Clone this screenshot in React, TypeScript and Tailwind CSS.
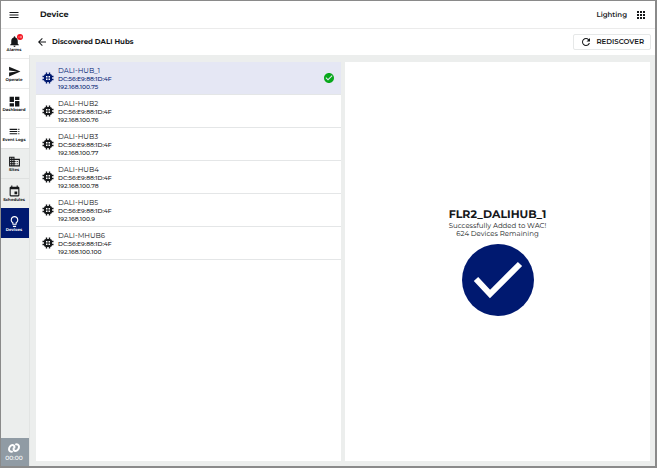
import type { ReactNode } from 'react';
import { clsx } from 'clsx';
import {
  MdApps,
  MdArrowBack,
  MdBusiness,
  MdCheckCircle,
  MdDashboard,
  MdEvent,
  MdLightbulbOutline,
  MdMenu,
  MdNotifications,
  MdRefresh,
  MdSend,
  MdToc,
} from 'react-icons/md';

type NavItem = {
  label: string;
  icon: ReactNode;
  tone: 'light' | 'muted' | 'active';
  alert?: boolean;
};

const navItems: NavItem[] = [
  { label: 'Alarms', icon: <MdNotifications />, tone: 'light', alert: true },
  { label: 'Operate', icon: <MdSend />, tone: 'light' },
  { label: 'Dashboard', icon: <MdDashboard />, tone: 'light' },
  { label: 'Event Logs', icon: <MdToc />, tone: 'light' },
  { label: 'Sites', icon: <MdBusiness />, tone: 'muted' },
  { label: 'Schedules', icon: <MdEvent />, tone: 'muted' },
  { label: 'Devices', icon: <MdLightbulbOutline />, tone: 'active' },
];

const hubs = [
  { name: 'DALI-HUB_1', mac: 'DC:56:E9:88:1D:4F', ip: '192.168.100.75', added: true },
  { name: 'DALI-HUB2', mac: 'DC:56:E9:88:1D:4F', ip: '192.168.100.76' },
  { name: 'DALI-HUB3', mac: 'DC:56:E9:88:1D:4F', ip: '192.168.100.77' },
  { name: 'DALI-HUB4', mac: 'DC:56:E9:88:1D:4F', ip: '192.168.100.78' },
  { name: 'DALI-HUB5', mac: 'DC:56:E9:88:1D:4F', ip: '192.168.100.9' },
  { name: 'DALI-MHUB6', mac: 'DC:56:E9:88:1D:4F', ip: '192.168.100.100' },
];

function ChipIcon() {
  return (
    <svg viewBox="0 0 24 24" className="size-3 shrink-0" aria-hidden="true">
      <path d="M9 1v22M15 1v22M1 9h22M1 15h22" stroke="currentColor" strokeWidth="2.800" />
      <rect x="4" y="4" width="16" height="16" rx="4" fill="currentColor" />
      <path d="M8 8h3v3H8zM13 8h3v3h-3zM8 13h3v3H8zM13 13h3v3h-3z" fill="white" />
    </svg>
  );
}

function AlertBadge() {
  return (
    <svg viewBox="0 0 12 12" className="absolute -top-px -right-0.5 size-1.5" aria-hidden="true">
      <circle cx="6" cy="6" r="6" fill="#f4101c" />
      <path d="M4 4v4M7 4h2v4H7z" fill="none" stroke="white" strokeOpacity="0.7" />
    </svg>
  );
}

function LinkIcon() {
  return (
    <svg viewBox="0 0 24 20" className="h-2.5 w-3" fill="none" stroke="currentColor" strokeWidth="4" aria-hidden="true">
      <path d="M9.500 16.500C6 19 2 16.500 2 12.500c0-4.500 3.500-8.500 7-8.500 3.500 0 4.500 3 3.500 6.500" />
      <path d="M14.500 3.500C18 1 22 3.500 22 7.500c0 4.500-3.500 8.500-7 8.500-3.500 0-4.500-3-3.500-6.500" />
    </svg>
  );
}

function Sidebar() {
  return (
    <nav className="flex w-7 shrink-0 flex-col bg-[#eceeed]">
      <button aria-label="Menu" className="flex h-[27px] items-center justify-center bg-white pr-0.5">
        <MdMenu className="size-3" />
      </button>
      {navItems.map(({ label, icon, tone, alert }) => (
        <a
          key={label}
          href="#"
          className={clsx(
            'flex h-[30px] flex-col items-center justify-center border-t pt-px pr-0.5 text-[4px] leading-[6px] font-bold whitespace-nowrap',
            tone === 'light' && 'border-[#ebebeb] bg-white',
            tone === 'muted' && 'border-[#dfe1e0]',
            tone === 'active' && 'border-[#001970] bg-[#001970] text-white',
          )}
        >
          <span className="relative text-[13px]">
            {icon}
            {alert && <AlertBadge />}
          </span>
          {label}
        </a>
      ))}
      <div className="mt-auto flex h-7 flex-col items-center justify-center gap-0.5 bg-[#909ba4] pr-0.5 text-[6px] leading-[7px] font-medium text-white">
        <LinkIcon />
        00:00
      </div>
    </nav>
  );
}

function HubList() {
  return (
    <ul className="min-w-0 flex-1 bg-white">
      {hubs.map((hub) => (
        <li key={hub.name} className={clsx('border-b border-[#e4e6e7]', hub.added && 'bg-[#e5e7f4] text-[#001970]')}>
          <button className="flex h-8 w-full items-center gap-1 px-1.5 text-left">
            <ChipIcon />
            <span className="flex flex-1 flex-col pt-0.5 text-[6px] leading-[8px] font-medium">
              <span className="text-[7px] font-normal">{hub.name}</span>
              <span>{hub.mac}</span>
              <span>{hub.ip}</span>
            </span>
            {hub.added && <MdCheckCircle className="size-3 text-[#08a81b]" />}
          </button>
        </li>
      ))}
    </ul>
  );
}

function HubResult() {
  return (
    <section className="flex min-w-0 flex-1 flex-col items-center justify-center bg-white text-[7px] leading-[8px]">
      <h2 className="mb-0.5 text-[11px] leading-[12px] font-bold">FLR2_DALIHUB_1</h2>
      <p>Successfully Added to WAC!</p>
      <p>624 Devices Remaining</p>
      <svg viewBox="0 0 72 72" className="mt-1.5 size-[72px]" aria-hidden="true">
        <circle cx="36" cy="36" r="36" fill="#001970" />
        <path d="M14 35l14 15 30-30" fill="none" stroke="white" strokeWidth="6" />
      </svg>
    </section>
  );
}

export default function App() {
  return (
    <div className="flex min-h-screen border border-r-2 border-b-2 border-[#8a8a8a] bg-white font-['Montserrat','Inter',sans-serif] text-[#151719] [text-rendering:geometricPrecision]">
      <Sidebar />
      <div className="flex min-w-0 flex-1 flex-col">
        <header className="flex h-7 items-center gap-2 border-b border-[#ebebeb] pr-2 pl-[11px]">
          <h1 className="flex-1 text-[8px] font-bold">Device</h1>
          <span className="text-[7px] leading-[12px] font-semibold">Lighting</span>
          <button aria-label="Apps">
            <MdApps className="size-3" />
          </button>
        </header>
        <div className="flex h-[26px] items-center gap-1 pr-1 pl-[7px]">
          <button aria-label="Back">
            <MdArrowBack className="size-3" />
          </button>
          <h2 className="flex-1 text-[7px] font-bold">Discovered DALI Hubs</h2>
          <button className="flex h-4 items-center gap-1 rounded-xs border border-[#e6e8e8] px-1.5 text-[7px] font-semibold">
            <MdRefresh className="size-3" />
            REDISCOVER
          </button>
        </div>
        <main className="flex flex-1 gap-1 border-l border-[#e2e4e3] bg-[#eceeed] pt-[7px] pr-[5px] pb-[5px] pl-1.5">
          <HubList />
          <HubResult />
        </main>
      </div>
    </div>
  );
}
